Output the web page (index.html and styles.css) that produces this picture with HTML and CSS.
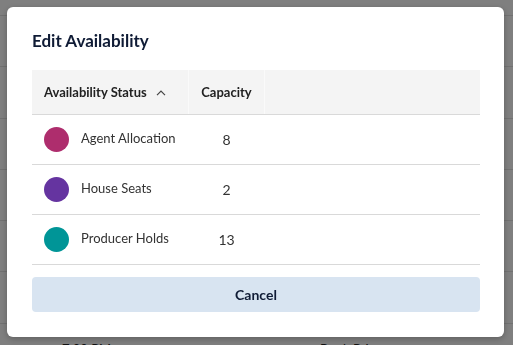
FILE: index.html
```html
<!DOCTYPE html>
<html lang="en">

<head>
  <meta charset="UTF-8" />
  <meta name="viewport" content="width=device-width, initial-scale=1.0" />
  <title>Edit Availability</title>
  <link rel="stylesheet" href="styles.css">
</head>

<body>

  <!-- page behind the dialog -->
  <div class="page">
    <div class="page-row"></div>
    <div class="page-row"></div>
    <div class="page-row"></div>
    <div class="page-row"></div>
    <div class="page-row"></div>
    <div class="page-row"></div>
    <div class="page-row page-row-text">
      <span class="time">7:00 PM</span>
      <span class="price">Book Price</span>
      <span class="close">×</span>
    </div>
  </div>

  <div class="overlay"></div>

  <div class="modal">
    <h2>Edit Availability</h2>

    <table class="avail-table">
      <thead>
        <tr>
          <th class="col-status">
            Availability Status
            <svg class="sort" viewBox="0 0 10 6" width="10" height="6">
              <path d="M1 5.2 L5 1.2 L9 5.2" fill="none" stroke="#444" stroke-width="1.2" />
            </svg>
          </th>
          <th class="col-cap">Capacity</th>
          <th></th>
        </tr>
      </thead>
      <tbody>
        <tr>
          <td><span class="dot dot-agent"></span>Agent Allocation</td>
          <td class="cap">8</td>
          <td></td>
        </tr>
        <tr>
          <td><span class="dot dot-house"></span>House Seats</td>
          <td class="cap">2</td>
          <td></td>
        </tr>
        <tr>
          <td><span class="dot dot-producer"></span>Producer Holds</td>
          <td class="cap">13</td>
          <td></td>
        </tr>
      </tbody>
    </table>

    <button type="button" class="cancel">Cancel</button>
  </div>

</body>

</html>
```

FILE: styles.css
```css
body {
  margin: 0;
  font-family: Lato, "Noto Sans", Arial, sans-serif;
  background: #fff;
  overflow: hidden;
  height: 345px;
}

.page {
  padding-top: 15px;
}

.page-row {
  box-sizing: border-box;
  height: 51.3px;
  border-top: 1px solid #e3e3e3;
}

.page-row-text {
  position: relative;
  font-size: 13px;
  color: #222;
}

.page-row-text span {
  position: absolute;
  top: 17px;
}

.time {
  left: 62px;
}

.price {
  left: 320px;
}

.page-row-text .close {
  left: 465px;
  top: 12px;
  font-size: 22px;
  font-weight: 300;
}

.overlay {
  position: fixed;
  inset: 0;
  background: rgba(0, 0, 0, 0.5);
}

.modal {
  position: fixed;
  left: 7px;
  top: 7px;
  width: 497px;
  height: 330px;
  box-sizing: border-box;
  padding: 24px 24px 25px 25px;
  background: #fff;
  border-radius: 6px;
  box-shadow: 0 2px 6px rgba(0, 0, 0, 0.25);
}

h2 {
  margin: 0 0 19px;
  font-size: 17px;
  line-height: 20px;
  font-weight: 700;
  color: #0f1b35;
}

.avail-table {
  width: 448px;
  border-collapse: collapse;
  table-layout: fixed;
  font-size: 13px;
  color: #333;
}

.avail-table th {
  height: 44px;
  padding: 0 12px;
  background: #f4f4f4;
  text-align: left;
  font-weight: 700;
  color: #222;
  border-bottom: 1px solid #d9d9d9;
  border-right: 1px solid #fafafa;
}

.avail-table th:last-child {
  border-right: none;
}

.col-status {
  width: 132px;
}

.col-cap {
  width: 51px;
}

.avail-table th.col-cap,
.avail-table td.cap {
  text-align: center;
}

.sort {
  margin-left: 6px;
  vertical-align: 1px;
}

.avail-table td {
  height: 49px;
  padding: 0 12px;
  border-bottom: 1px solid #d9d9d9;
  white-space: nowrap;
}

.cap {
  font-size: 14px;
}

.dot {
  display: inline-block;
  width: 25px;
  height: 25px;
  border-radius: 50%;
  margin-right: 12px;
  vertical-align: middle;
}

.dot-agent {
  background: #ae2d6d;
}

.dot-house {
  background: #6534a0;
}

.dot-producer {
  background: #009597;
}

.cancel {
  display: block;
  width: 448px;
  height: 35px;
  margin-top: 12px;
  border: none;
  border-radius: 4px;
  background: #d8e4f1;
  font-family: inherit;
  font-size: 14px;
  font-weight: 700;
  color: #0f1b35;
  cursor: pointer;
}
```
